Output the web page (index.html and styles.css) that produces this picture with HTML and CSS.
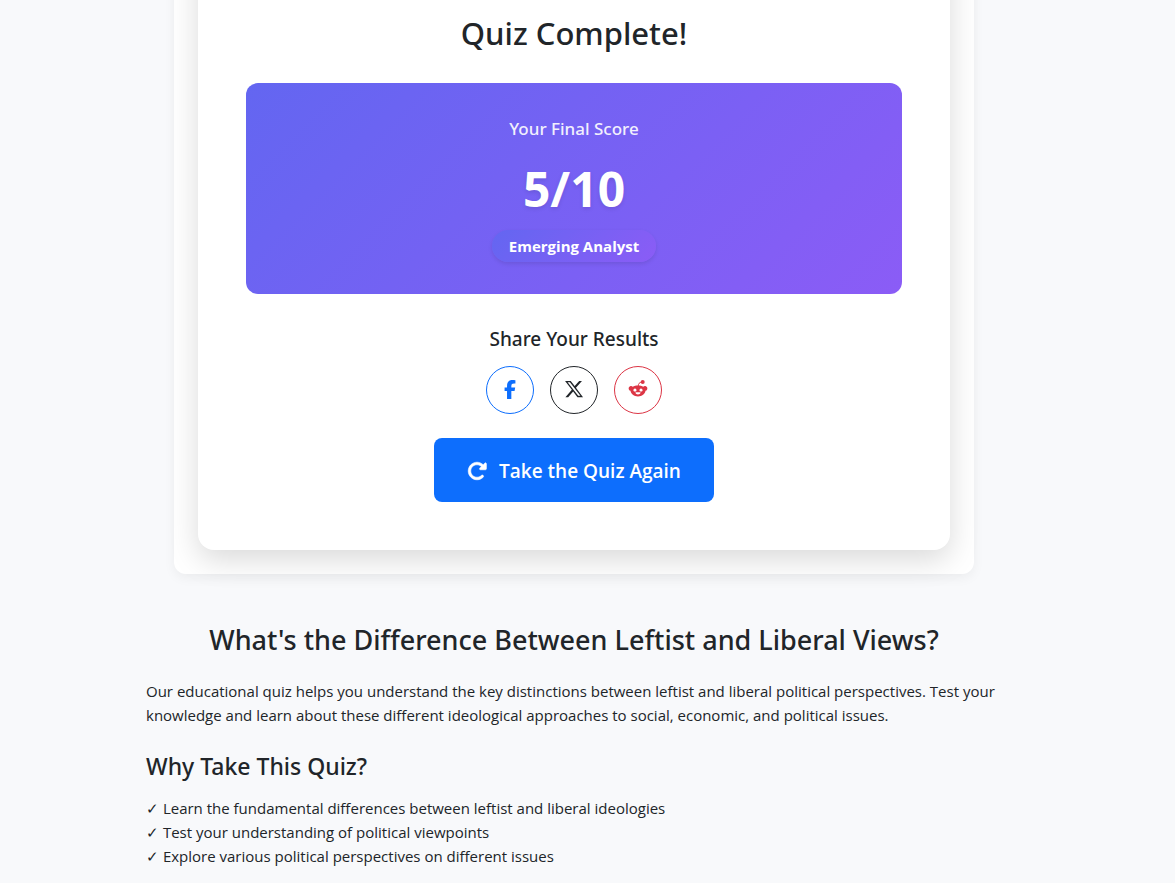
FILE: index.html
```
<!DOCTYPE html>
<html lang="en">
<head>
    <meta charset="UTF-8">
    <meta name="viewport" content="width=device-width, initial-scale=1">
    <title>Leftist vs Liberal Quiz</title>
    <link rel="stylesheet" href="styles.css">
</head>
<body>

<main class="quiz-container">
    <section class="results-card">
        <h2 class="results-title">Quiz Complete!</h2>
        <div class="score-box">
            <p class="score-label">Your Final Score</p>
            <p class="score-value">5/10</p>
            <span class="score-badge">Emerging Analyst</span>
        </div>
        <h3 class="share-title">Share Your Results</h3>
        <div class="share-buttons">
            <button type="button" class="share-btn facebook" aria-label="Share on Facebook">
                <svg viewBox="0 0 320 512" width="12" height="19"><path d="M80 299.3V512H196V299.3h86.5l18-97.8H196V166.9c0-51.7 20.3-71.5 72.7-71.5c16.3 0 29.4 .4 37 1.2V7.9C291.4 4 256.4 0 236.2 0C129.3 0 80 50.5 80 159.4v42.1H14v97.8H80z"/></svg>
            </button>
            <button type="button" class="share-btn twitter" aria-label="Share on X">
                <svg viewBox="0 0 512 512" width="20" height="20"><path d="M389.2 48h70.6L305.6 224.2 487 464H345L233.7 318.6 106.5 464H35.8L200.7 275.5 26.8 48H172.4L272.9 180.9 389.2 48zM364.4 431.8h56.100L151.100 80h-59L364.400 431.800z"/></svg>
            </button>
            <button type="button" class="share-btn reddit" aria-label="Share on Reddit">
                <svg viewBox="0 0 20 20" width="20" height="20">
                    <path fill-rule="evenodd" d="M10 6.400c2 0 3.900.5 5.300 1.300a2.400 2.400 0 1 1 2.200 4.100c-.5 3.300-3.500 5.600-7.500 5.600s-7-2.300-7.500-5.600a2.400 2.400 0 1 1 2.200-4.100c1.400-.8 3.300-1.300 5.300-1.300zM7 9.400c-.9 0-1.600.9-1.600 1.800s.6 1.300 1.600 1.300 1.500-.4 1.500-1.300-.6-1.800-1.500-1.800zM13 9.400c-.9 0-1.500.9-1.500 1.800s.5 1.300 1.500 1.300 1.600-.4 1.600-1.300-.7-1.800-1.600-1.800zM10 13.300c-1 0-1.900.1-2.700.2.300 1.200 1.400 2 2.700 2s2.400-.8 2.700-2c-.8-.1-1.700-.2-2.700-.2z"/>
                    <path class="antenna" d="M10.200 7c.1-2.200 1.300-3.600 3.300-3.900"/>
                    <circle cx="14.700" cy="2.900" r="2"/>
                </svg>
            </button>
        </div>
        <button type="button" class="restart-btn">
            <svg viewBox="0 0 512 512" width="20" height="20" aria-hidden="true"><path class="arrow" d="M463.5 224H472c13.300 0 24-10.700 24-24V72c0-9.700-5.800-18.500-14.800-22.200s-19.300-1.700-26.200 5.200L413.400 96.600c-87.600-86.500-228.700-86.200-315.800 1c-87.500 87.500-87.500 229.300 0 316.800s229.300 87.500 316.800 0c12.500-12.500 12.500-32.800 0-45.300s-32.800-12.500-45.300 0c-62.500 62.500-163.800 62.500-226.300 0s-62.500-163.800 0-226.300c62.200-62.200 162.700-62.500 225.300-1L327 183c-6.900 6.900-8.900 17.200-5.200 26.200s12.500 14.800 22.200 14.800H463.500z"/></svg>
            Take the Quiz Again
        </button>
    </section>
</main>

<section class="seo-content">
    <h1>What's the Difference Between Leftist and Liberal Views?</h1>
    <p>Our educational quiz helps you understand the key distinctions between leftist and liberal political perspectives. Test your knowledge and learn about these different ideological approaches to social, economic, and political issues.</p>
    <h2>Why Take This Quiz?</h2>
    <ul>
        <li>✓ Learn the fundamental differences between leftist and liberal ideologies</li>
        <li>✓ Test your understanding of political viewpoints</li>
        <li>✓ Explore various political perspectives on different issues</li>
    </ul>
</section>

</body>
</html>
```
FILE: styles.css
```
* {
    box-sizing: border-box;
    margin: 0;
    padding: 0;
}
body {
    padding-right: 27px;
    background: #f8f9fb;
    color: #212529;
    font-family: "Segoe UI", "Open Sans", "Noto Sans", sans-serif;
    font-size: 15px;
    line-height: 24px;
}
h1, h2, h3 {
    font-family: "Segoe UI", "Noto Sans", "Open Sans", sans-serif;
    font-weight: 500;
}

/* results */
.quiz-container {
    max-width: 800px;
    margin: -160px auto 48px;
    padding: 24px;
    border-radius: 12px;
    background: #fff;
    box-shadow: 0 4px 12px rgba(0, 0, 0, .05);
}
.results-card {
    padding: 150px 48px 48px;
    border-radius: 16px;
    background: #fff;
    box-shadow: 0 10px 30px rgba(0, 0, 0, .15);
    text-align: center;
}
.results-title {
    margin-bottom: 31px;
    font-size: 31px;
    line-height: 38px;
}
.score-box {
    margin-bottom: 32px;
    padding: 32px;
    border-radius: 12px;
    background: linear-gradient(135deg, #6366f1, #8b5cf6);
    color: #fff;
}
.score-label {
    margin-bottom: 16px;
    font-family: "Segoe UI", "Noto Sans", "Open Sans", sans-serif;
    font-size: 17px;
    font-weight: 500;
    line-height: 28px;
    opacity: .9;
}
.score-value {
    margin-bottom: 11px;
    font-size: 48px;
    font-weight: 700;
    line-height: 60px;
    text-shadow: 0 2px 4px rgba(0, 0, 0, .1);
}
.score-badge {
    display: block;
    width: fit-content;
    margin: 0 auto;
    padding: 4px 17px;
    border-radius: 16px;
    background: linear-gradient(135deg, #6366f1, #8b5cf6);
    box-shadow: 0 2px 4px rgba(0, 0, 0, .1);
    font-weight: 700;
}
.share-title {
    margin-bottom: 14px;
    font-size: 19px;
    line-height: 26px;
}
.share-buttons {
    display: flex;
    justify-content: center;
    gap: 16px;
    margin-bottom: 24px;
}
.share-btn {
    display: flex;
    align-items: center;
    justify-content: center;
    width: 48px;
    height: 48px;
    padding-bottom: 2px;
    border: 1px solid currentColor;
    border-radius: 50%;
    background: none;
    cursor: pointer;
}
.share-btn svg, .restart-btn svg {
    fill: currentColor;
}
.facebook { color: #0d6efd; }
.twitter { color: #212529; }
.reddit { color: #dc3545; }
.reddit .antenna {
    fill: none;
    stroke: currentColor;
}
.restart-btn {
    display: inline-flex;
    align-items: center;
    gap: 12px;
    padding: 17px 33px 15px;
    border: 0;
    border-radius: 8px;
    background: #0d6efd;
    color: #fff;
    font: 600 19px/32px "Segoe UI", "Open Sans", "Noto Sans", sans-serif;
    vertical-align: top;
    cursor: pointer;
}
.restart-btn .arrow {
    stroke: currentColor;
    stroke-width: 16;
}

/* text below the quiz */
.seo-content {
    max-width: 880px;
    margin: 0 auto;
    padding: 0 12px;
}
.seo-content h1 {
    margin-bottom: 21px;
    font-size: 27px;
    line-height: 36px;
    text-align: center;
}
.seo-content p {
    margin-bottom: 24px;
}
.seo-content h2 {
    margin-bottom: 15px;
    font-size: 23px;
    line-height: 30px;
}
.seo-content ul {
    list-style: none;
}
```
